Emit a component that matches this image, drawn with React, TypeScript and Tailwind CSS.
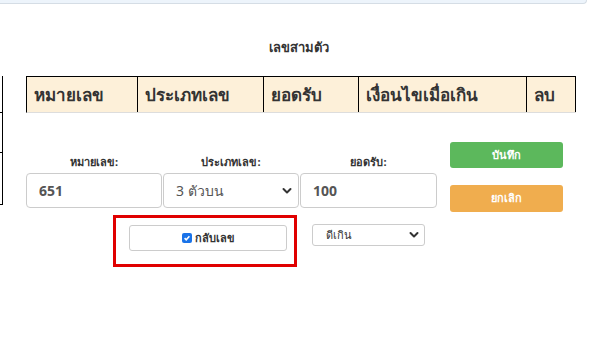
import React from "react";

const font = { fontFamily: "Tahoma, 'Noto Sans', 'DejaVu Sans', 'Liberation Sans', sans-serif" };

function Chevron({ className = "" }: { className?: string }) {
  return (
    <svg viewBox="0 0 10 8" className={className} fill="none" stroke="#333" strokeWidth="2" strokeLinecap="round" strokeLinejoin="round">
      <path d="M1.5 2l3.5 3.5L8.5 2" />
    </svg>
  );
}

export default function App() {
  return (
    <div className="relative w-[598px] h-[338px] bg-white overflow-hidden text-[#333]" style={font}>
      <div className="w-[587px] h-[4px] bg-[#edf4fb] border-b border-r border-[#d5dde5] rounded-br-[4px]" />
      <div className="mt-[35px] text-center text-[13px] font-bold leading-[16px]">เลขสามตัว</div>
      <div className="mt-[21px] flex items-start">
        {/* left sliver of another table */}
        <div className="w-[3px] flex flex-col border-r border-black">
          <div className="h-[37px] border-b border-black" />
          <div className="h-[40px] border-b border-black" />
          <div className="h-[52px] border-b border-black" />
        </div>
        <div className="ml-[23px] w-[550px] flex flex-col">
          <div className="flex h-[37px] bg-[#fdf0d9] border-t border-l border-black border-b border-b-[#ddd] text-[17px] font-bold">
            <div className="w-[111px] border-r border-black pl-[7px] flex items-center">หมายเลข</div>
            <div className="w-[126px] border-r border-black pl-[7px] flex items-center">ประเภทเลข</div>
            <div className="w-[95px] border-r border-black pl-[7px] flex items-center">ยอดรับ</div>
            <div className="w-[168px] border-r border-black pl-[7px] flex items-center">เงื่อนไขเมื่อเกิน</div>
            <div className="w-[49px] border-r border-black pl-[7px] flex items-center">ลบ</div>
          </div>
          <div className="flex">
            <div className="w-[424px] flex flex-col">
              <div className="mt-[42px] flex gap-[1px] text-[11px] font-bold leading-[14px]">
                <div className="w-[136px] text-center">หมายเลข:</div>
                <div className="w-[136px] text-center">ประเภทเลข:</div>
                <div className="w-[137px] text-center">ยอดรับ:</div>
              </div>
              <div className="mt-[4px] flex gap-[1px]">
                <div className="w-[136px] h-[35px] border border-[#ccc] rounded-[4px] flex items-center pl-[12px] text-[14px] font-bold text-[#555]">651</div>
                <div className="w-[136px] h-[35px] border border-[#ccc] rounded-[4px] flex items-center justify-between pl-[12px] pr-[6px] text-[14px] text-[#555]">
                  <span>3 ตัวบน</span>
                  <Chevron className="w-[10px] h-[8px]" />
                </div>
                <div className="w-[137px] h-[35px] border border-[#ccc] rounded-[4px] flex items-center pl-[12px] text-[14px] font-bold text-[#555]">100</div>
              </div>
              <div className="mt-[7px] flex items-start">
                <div className="ml-[87px] w-[184px] h-[52px] border-[3px] border-[#e00000] pt-[7px] pl-[13px]">
                  <div className="w-[158px] h-[26px] border border-[#ccc] rounded-[3px] flex items-center justify-center gap-[3px] text-[11px] font-bold">
                    <span className="w-[10px] h-[10px] rounded-[2px] bg-[#1a73e8] flex items-center justify-center">
                      <svg viewBox="0 0 10 10" className="w-[8px] h-[8px]" fill="none" stroke="white" strokeWidth="2">
                        <path d="M2 5.2l2 2 4-4.5" />
                      </svg>
                    </span>
                    <span>กลับเลข</span>
                  </div>
                </div>
                <div className="ml-[15px] mt-[9px] w-[113px] h-[22px] border border-[#ccc] rounded-[3px] flex items-center justify-between pl-[13px] pr-[5px] text-[11px]">
                  <span>ดีเกิน</span>
                  <Chevron className="w-[10px] h-[8px]" />
                </div>
              </div>
            </div>
            <div className="mt-[29px] w-[113px] flex flex-col">
              <div className="h-[26px] bg-[#5cb85c] rounded-[3px] text-white text-[11px] font-bold flex items-center justify-center">บันทึก</div>
              <div className="mt-[17px] h-[27px] bg-[#f0ad4e] rounded-[3px] text-white text-[11px] font-bold flex items-center justify-center">ยกเลิก</div>
            </div>
          </div>
        </div>
      </div>
    </div>
  );
}
